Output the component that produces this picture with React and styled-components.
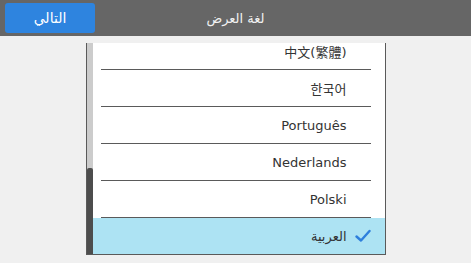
import React, { useLayoutEffect, useRef } from "react";
import styled, { createGlobalStyle } from "styled-components";

const Global = createGlobalStyle`
  html, body { margin: 0; padding: 0; background: #f0f0f0; }
  body { font-family: "DejaVu Sans", "Noto Sans CJK SC", sans-serif; }
  * { box-sizing: border-box; }
`;

const Page = styled.div`
  width: 471px;
  height: 263px;
  display: flex;
  flex-direction: column;
  background: #f0f0f0;
`;

const Header = styled.header`
  height: 36px;
  background: #666666;
  display: grid;
  grid-template-columns: 90px 1fr 90px;
  align-items: center;
  padding: 0 5px;
`;

const NextButton = styled.button`
  height: 30px;
  width: 90px;
  border: none;
  border-radius: 3px;
  background: #2e84df;
  color: #ffffff;
  font-family: "DejaVu Sans", sans-serif;
  font-size: 14px;
  padding: 0;
  direction: rtl;
`;

const Title = styled.h1`
  margin: 0;
  text-align: center;
  color: #f2f2f2;
  font-size: 13px;
  font-weight: normal;
  direction: rtl;
`;

const Panel = styled.div`
  margin: 7px auto 0;
  width: 300px;
  height: 212px;
  border: 1px solid #5a5a5a;
  border-top: none;
  background: #ffffff;
  display: flex;
`;

const ScrollTrack = styled.div`
  width: 6px;
  flex: none;
  background: #cccccc;
  display: flex;
  flex-direction: column;
  justify-content: flex-end;
`;

const ScrollThumb = styled.div`
  height: 86px;
  background: #4d4d4d;
  border-radius: 2px 2px 0 0;
`;

const Viewport = styled.div`
  flex: 1;
  overflow: hidden;
  direction: rtl;
`;

const Row = styled.div`
  height: 36px;
  display: flex;
  align-items: center;
  gap: 8px;
  padding-right: 14px;
  background: ${(p) => (p.$selected ? "#ade3f3" : "transparent")};
  color: #333333;
  font-size: 13px;
`;

const CheckSlot = styled.span`
  width: 16px;
  height: 16px;
  display: flex;
  align-items: center;
  justify-content: center;
  flex: none;
`;

const Label = styled.span`
  white-space: nowrap;
  font-family: "DejaVu Sans", "Noto Sans CJK TC", "Noto Sans CJK KR", sans-serif;
`;

const Divider = styled.div`
  height: 1px;
  background: #5a5a5a;
  margin: 0 14px 0 8px;
`;

const languages = [
  "English",
  "Deutsch",
  "Français",
  "Español",
  "Italiano",
  "Русский",
  "日本語",
  "中文(简体)",
  "中文(繁體)",
  "한국어",
  "Português",
  "Nederlands",
  "Polski",
  "العربية",
];

const selected = "العربية";

function Check() {
  return (
    <svg width="16" height="14" viewBox="0 0 16 14">
      <path d="M1.5 7.5 L6 11.5 L14.5 2" fill="none" stroke="#2e7fdc" strokeWidth="2.4" strokeLinecap="round" strokeLinejoin="round" />
    </svg>
  );
}

export default function App() {
  const ref = useRef(null);
  useLayoutEffect(() => {
    if (ref.current) ref.current.scrollTop = ref.current.scrollHeight;
  }, []);
  return (
    <Page>
      <Global />
      <Header>
        <NextButton>التالي</NextButton>
        <Title>لغة العرض</Title>
        <span />
      </Header>
      <Panel>
        <ScrollTrack>
          <ScrollThumb />
        </ScrollTrack>
        <Viewport ref={ref}>
          {languages.map((lang, i) => (
            <React.Fragment key={lang}>
              {i > 0 && <Divider />}
              <Row $selected={lang === selected}>
                <CheckSlot>{lang === selected && <Check />}</CheckSlot>
                <Label>{lang}</Label>
              </Row>
            </React.Fragment>
          ))}
        </Viewport>
      </Panel>
    </Page>
  );
}
